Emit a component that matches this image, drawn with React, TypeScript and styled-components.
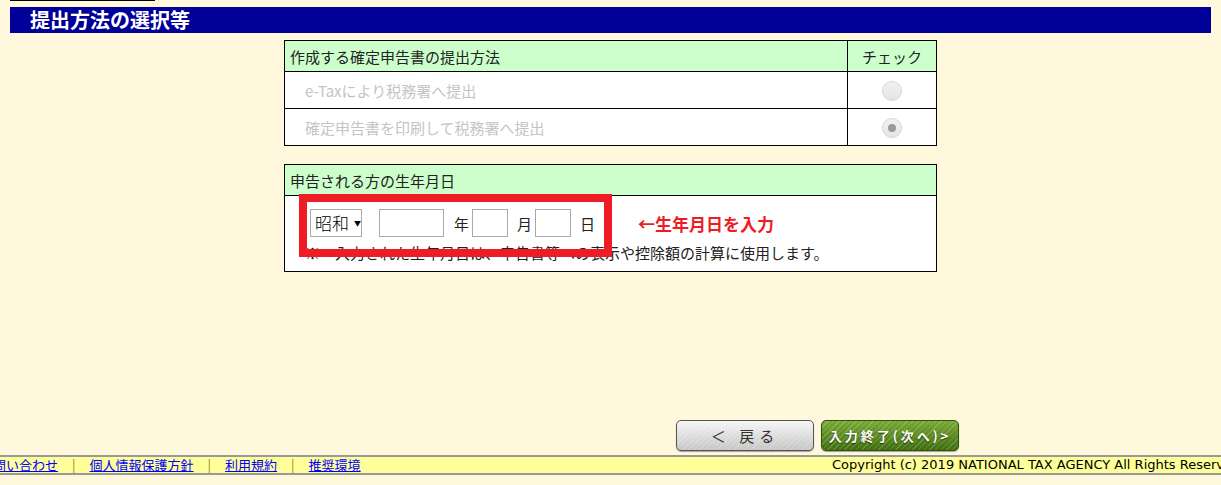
import styled, { createGlobalStyle } from "styled-components";

const GlobalStyle = createGlobalStyle`
  html, body {
    margin: 0;
    padding: 0;
    background: #fff8dc;
    font-family: "Noto Sans CJK JP", "Liberation Sans", sans-serif;
  }
`;

const Page = styled.div`
  width: 1221px;
  height: 485px;
  display: flex;
  flex-direction: column;
  overflow: hidden;
`;

const TopLine = styled.div`
  width: 145px;
  height: 1px;
  margin-left: 10px;
  background: #000;
`;

const TitleBar = styled.h1`
  margin: 6px 10px 0;
  height: 26px;
  line-height: 26px;
  padding-left: 20px;
  background: #000099;
  color: #fff;
  font-size: 20px;
  font-weight: bold;
`;

const Content = styled.div`
  width: 653px;
  margin: 7px auto 0;
  display: flex;
  flex-direction: column;
  gap: 18px;
`;

const Table = styled.table`
  width: 653px;
  border-collapse: collapse;
  border: 1px solid #000;
  font-size: 15px;
`;

const HeadCell = styled.th<{ $center?: boolean }>`
  background: #ccffcc;
  border: 1px solid #000;
  height: 30px;
  padding: 0 5px;
  font-weight: normal;
  color: #222;
  text-align: ${(p) => (p.$center ? "center" : "left")};
`;

const Cell = styled.td<{ $center?: boolean }>`
  background: #fff;
  border: 1px solid #000;
  height: 36px;
  padding: 0 0 0 20px;
  color: #c4c4c4;
  text-align: ${(p) => (p.$center ? "center" : "left")};
  ${(p) => p.$center && "padding: 0;"}
`;

const Radio = styled.span<{ $checked?: boolean }>`
  display: inline-flex;
  align-items: center;
  justify-content: center;
  width: 18px;
  height: 18px;
  border-radius: 50%;
  border: 1px solid #d6d6d6;
  background: linear-gradient(#f2f2f2, #e4e4e4);
  vertical-align: middle;

  &::after {
    content: "";
    width: 8px;
    height: 8px;
    border-radius: 50%;
    background: ${(p) => (p.$checked ? "#9a9a9a" : "transparent")};
  }
`;

const BirthCell = styled.td`
  position: relative;
  background: #fff;
  border: 1px solid #000;
  height: 76px;
  box-sizing: border-box;
  padding: 13px 0 0 25px;
  vertical-align: top;
  color: #222;
`;

const DateRow = styled.div`
  display: flex;
  align-items: center;
  height: 28px;
`;

const Select = styled.div`
  display: flex;
  align-items: center;
  gap: 5px;
  box-sizing: border-box;
  width: 52px;
  height: 28px;
  padding-left: 4px;
  border: 1px solid #a9a9a9;
  background: #fff;
  font-size: 17px;
  font-weight: 300;
  line-height: 26px;
  white-space: nowrap;
  color: #000;

  span {
    font-size: 7px;
  }
`;

const Input = styled.div<{ $w: number }>`
  box-sizing: border-box;
  width: ${(p) => p.$w}px;
  height: 28px;
  border: 1px solid #a9a9a9;
  background: #fff;
`;

const Unit = styled.span<{ $l: number; $r: number }>`
  margin: 0 ${(p) => p.$r}px 0 ${(p) => p.$l}px;
  font-size: 15px;
`;

const Hint = styled.span`
  margin-left: 43px;
  color: #ee1c24;
  font-size: 17px;
  font-weight: bold;
  white-space: nowrap;
`;

const Note = styled.p`
  margin: 6px 0 0 -5px;
  font-size: 15px;
  line-height: 20px;
`;

const Marker = styled.div`
  position: absolute;
  left: 14px;
  top: -2px;
  width: 313px;
  height: 63px;
  box-sizing: border-box;
  border: 8px solid #ee1c24;
  pointer-events: none;
`;

const Buttons = styled.div`
  margin-top: auto;
  padding-left: 676px;
  display: flex;
  gap: 7px;
`;

const Button = styled.button<{ $primary?: boolean }>`
  width: 138px;
  height: 31px;
  border-radius: 5px;
  font-family: "Noto Sans CJK JP", sans-serif;
  font-size: ${(p) => (p.$primary ? "13px" : "15px")};
  font-weight: ${(p) => (p.$primary ? "bold" : "normal")};
  letter-spacing: ${(p) => (p.$primary ? "3px" : "5px")};
  color: ${(p) => (p.$primary ? "#fff" : "#333")};
  border: 1px solid ${(p) => (p.$primary ? "#2f4f0a" : "#555")};
  text-shadow: ${(p) => (p.$primary ? "0 1px 1px #1f3300" : "none")};
  box-shadow: 0 1px 1px rgba(0, 0, 0, 0.35);
  background:
    repeating-linear-gradient(
      135deg,
      rgba(255, 255, 255, 0.18) 0 1px,
      transparent 1px 4px
    ),
    ${(p) =>
      p.$primary
        ? "linear-gradient(#78a834, #3f6e10)"
        : "linear-gradient(#f6f6f6, #c6c6c6)"};
  padding: 0;
`;

const Footer = styled.footer`
  margin-top: 4px;
  margin-bottom: 10px;
  height: 16px;
  border-top: 2px solid #999;
  border-bottom: 2px solid #999;
  background: #ffff99;
  overflow: hidden;
  font-size: 13px;
  line-height: 16px;
`;

const FooterInner = styled.div`
  display: grid;
  grid-template-columns: 852px auto;
  margin-left: -20px;
  white-space: nowrap;
`;

const Links = styled.div`
  display: flex;
  align-items: center;
`;

const Link = styled.a`
  color: #0000ff;
  text-decoration: underline;
`;

const Sep = styled.span`
  margin: 0 14px;
  color: #a08040;
`;

const Copy = styled.span`
  font-family: "DejaVu Sans", sans-serif;
  font-size: 13px;
  color: #000;
`;

export default function App() {
  return (
    <Page>
      <GlobalStyle />
      <TopLine />
      <TitleBar>提出方法の選択等</TitleBar>
      <Content>
        <Table>
          <thead>
            <tr>
              <HeadCell style={{ width: 552 }}>作成する確定申告書の提出方法</HeadCell>
              <HeadCell $center>チェック</HeadCell>
            </tr>
          </thead>
          <tbody>
            <tr>
              <Cell>e-Taxにより税務署へ提出</Cell>
              <Cell $center>
                <Radio />
              </Cell>
            </tr>
            <tr>
              <Cell>確定申告書を印刷して税務署へ提出</Cell>
              <Cell $center>
                <Radio $checked />
              </Cell>
            </tr>
          </tbody>
        </Table>

        <Table>
          <thead>
            <tr>
              <HeadCell>申告される方の生年月日</HeadCell>
            </tr>
          </thead>
          <tbody>
            <tr>
              <BirthCell>
                <DateRow>
                  <Select>
                    昭和<span>▼</span>
                  </Select>
                  <Input $w={65} style={{ marginLeft: 17 }} />
                  <Unit $l={10} $r={3}>年</Unit>
                  <Input $w={36} />
                  <Unit $l={9} $r={3}>月</Unit>
                  <Input $w={36} />
                  <Unit $l={9} $r={0}>日</Unit>
                  <Hint>←生年月日を入力</Hint>
                </DateRow>
                <Note>※　入力された生年月日は、申告書等への表示や控除額の計算に使用します。</Note>
                <Marker />
              </BirthCell>
            </tr>
          </tbody>
        </Table>
      </Content>

      <Buttons>
        <Button>＜ 戻る</Button>
        <Button $primary>入力終了(次へ)&gt;</Button>
      </Buttons>

      <Footer>
        <FooterInner>
          <Links>
            <Link href="#">お問い合わせ</Link>
            <Sep>|</Sep>
            <Link href="#">個人情報保護方針</Link>
            <Sep>|</Sep>
            <Link href="#">利用規約</Link>
            <Sep>|</Sep>
            <Link href="#">推奨環境</Link>
          </Links>
          <Copy>Copyright (c) 2019 NATIONAL TAX AGENCY All Rights Reserved.</Copy>
        </FooterInner>
      </Footer>
    </Page>
  );
}
